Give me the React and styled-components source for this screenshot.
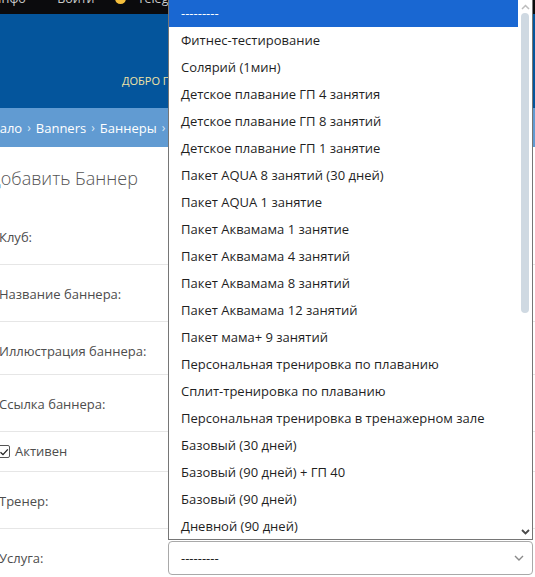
import styled, { createGlobalStyle } from "styled-components";

const GlobalStyle = createGlobalStyle`
  html, body {
    margin: 0;
    padding: 0;
    background: #fff;
    font-family: "Open Sans", "Noto Sans", sans-serif;
  }
`;

const services = [
  "---------",
  "Фитнес-тестирование",
  "Солярий (1мин)",
  "Детское плавание ГП 4 занятия",
  "Детское плавание ГП 8 занятий",
  "Детское плавание ГП 1 занятие",
  "Пакет AQUA 8 занятий (30 дней)",
  "Пакет AQUA 1 занятие",
  "Пакет Аквамама 1 занятие",
  "Пакет Аквамама 4 занятий",
  "Пакет Аквамама 8 занятий",
  "Пакет Аквамама 12 занятий",
  "Пакет мама+ 9 занятий",
  "Персональная тренировка по плаванию",
  "Сплит-тренировка по плаванию",
  "Персональная тренировка в тренажерном зале",
  "Базовый (30 дней)",
  "Базовый (90 дней) + ГП 40",
  "Базовый (90 дней)",
  "Дневной (90 дней)",
];

export default function App() {
  return (
    <>
      <GlobalStyle />
      <Page>
        <TopBar>
          <TopLinks>
            <span>Инфо</span>
            <Dot>·</Dot>
            <span>Войти</span>
            <Coin />
            <Telegram>Telegram</Telegram>
          </TopLinks>
        </TopBar>

        <Header>
          <Greeting>Добро пожаловать</Greeting>
        </Header>

        <Crumbs>
          <span>Начало</span>
          <Sep>›</Sep>
          <span>Banners</span>
          <Sep>›</Sep>
          <span>Баннеры</span>
          <Sep>›</Sep>
          <span>Добавить Баннер</span>
        </Crumbs>

        <Title>Добавить Баннер</Title>

        <Form>
          <Row>
            <Label>Клуб:</Label>
            <Field $h={34} />
          </Row>
          <Row>
            <Label>Название баннера:</Label>
            <Field $h={34} />
          </Row>
          <Row>
            <Label>Иллюстрация баннера:</Label>
            <Field $h={30} />
          </Row>
          <Row>
            <Label>Ссылка баннера:</Label>
            <Field $h={34} />
          </Row>
          <Row $compact>
            <CheckLabel>
              <Check>
                <svg width="10" height="10" viewBox="0 0 10 10">
                  <path d="M1.5 5.2 L4 7.6 L8.8 2.4" fill="none" stroke="#222" strokeWidth="1.3" />
                </svg>
              </Check>
              Активен
            </CheckLabel>
          </Row>
          <Row>
            <Label>Тренер:</Label>
            <Field $h={34} />
          </Row>
          <Row>
            <Label>Услуга:</Label>
            <SelectBox>
              <span>---------</span>
              <svg width="10" height="6" viewBox="0 0 10 6">
                <path d="M1 1 L5 5 L9 1" fill="none" stroke="#8a8a8a" strokeWidth="1.4" />
              </svg>
            </SelectBox>
          </Row>
        </Form>

        {/* open list of the "Услуга" select */}
        <Popup>
          <Options>
            {services.map((s, i) => (
              <Option key={s} $active={i === 0}>
                {s}
              </Option>
            ))}
          </Options>
          <Scroll>
            <svg width="9" height="6" viewBox="0 0 9 6">
              <path d="M1 5 L4.5 1.5 L8 5" fill="none" stroke="#bdbdbd" strokeWidth="1.5" />
            </svg>
            <Thumb />
            <Spacer />
            <svg width="9" height="6" viewBox="0 0 9 6">
              <path d="M1 1 L4.5 4.5 L8 1" fill="none" stroke="#4a4a4a" strokeWidth="1.8" />
            </svg>
          </Scroll>
        </Popup>
      </Page>
    </>
  );
}

const Page = styled.div`
  position: relative;
  width: 535px;
  height: 577px;
  overflow: hidden;
`;

const TopBar = styled.div`
  height: 14px;
  background: #0b0b0d;
  overflow: hidden;
`;

const TopLinks = styled.div`
  display: flex;
  align-items: center;
  gap: 14px;
  margin: -12px 0 0 -8px;
  height: 20px;
  font-size: 12.5px;
  color: #c9c9c9;
`;

const Dot = styled.span`
  color: #777;
`;

const Coin = styled.span`
  width: 11px;
  height: 11px;
  border-radius: 50%;
  background: #f4be3c;
  margin-left: 6px;
`;

const Telegram = styled.span`
  margin-left: -2px;
`;

const Header = styled.div`
  height: 94px;
  background: #04559c;
  display: flex;
  align-items: flex-end;
  padding-left: 122px;
`;

const Greeting = styled.div`
  font-size: 11px;
  text-transform: uppercase;
  color: #f1e3a6;
  white-space: nowrap;
  padding-bottom: 20px;
`;

const Crumbs = styled.div`
  height: 39px;
  background: #619bd2;
  display: flex;
  align-items: center;
  gap: 5px;
  margin-left: -25px;
  font-size: 13px;
  color: #fff;
  white-space: nowrap;
`;

const Sep = styled.span`
  color: #dbe8f5;
  font-size: 12px;
`;

const Title = styled.h1`
  margin: 19px 0 18px -11px;
  font-size: 18px;
  line-height: 24px;
  font-weight: 300;
  color: #555;
`;

const Form = styled.div`
  display: flex;
  flex-direction: column;
`;

const Row = styled.div`
  display: grid;
  grid-template-columns: 168px 365px;
  align-items: start;
  padding: ${(p) => (p.$compact ? "11px 0 11px" : "12px 0 10px")};
  border-bottom: 1px solid #e6e6e6;
`;

const Label = styled.label`
  margin: 7px 0 0 -1px;
  font-size: 13px;
  line-height: 20px;
  color: #4d4d4d;
  white-space: nowrap;
`;

const Field = styled.div`
  height: ${(p) => p.$h}px;
`;

const CheckLabel = styled.label`
  display: flex;
  align-items: center;
  gap: 5px;
  margin-left: -3px;
  height: 17px;
  font-size: 13px;
  line-height: 17px;
  color: #4d4d4d;
`;

const Check = styled.span`
  display: flex;
  align-items: center;
  justify-content: center;
  width: 11px;
  height: 11px;
  border: 1px solid #555;
  border-radius: 2px;
  background: #fff;
`;

const SelectBox = styled.div`
  box-sizing: border-box;
  height: 34px;
  display: flex;
  align-items: center;
  justify-content: space-between;
  padding: 0 8px 0 12px;
  border: 1px solid #a9a9a9;
  border-radius: 4px;
  font-size: 13px;
  color: #222;
`;

const Popup = styled.div`
  position: absolute;
  top: 0;
  left: 168px;
  width: 365px;
  height: 540px;
  box-sizing: border-box;
  display: flex;
  background: #fff;
  border: 1px solid #767676;
  border-top: none;
`;

const Options = styled.ul`
  flex: 1;
  margin: 0;
  padding: 0;
  list-style: none;
  overflow: hidden;
`;

const Option = styled.li`
  height: 27px;
  line-height: 27px;
  padding-left: 12px;
  font-size: 13px;
  white-space: nowrap;
  color: ${(p) => (p.$active ? "#fff" : "#1f1f1f")};
  background: ${(p) => (p.$active ? "#1967d2" : "transparent")};
`;

const Scroll = styled.div`
  width: 14px;
  display: flex;
  flex-direction: column;
  align-items: center;
  padding: 4px 0 4px;
  box-sizing: border-box;
`;

const Thumb = styled.div`
  width: 8px;
  height: 300px;
  margin-top: 3px;
  border-radius: 4px;
  background: #cfd9e2;
`;

const Spacer = styled.div`
  flex: 1;
`;
